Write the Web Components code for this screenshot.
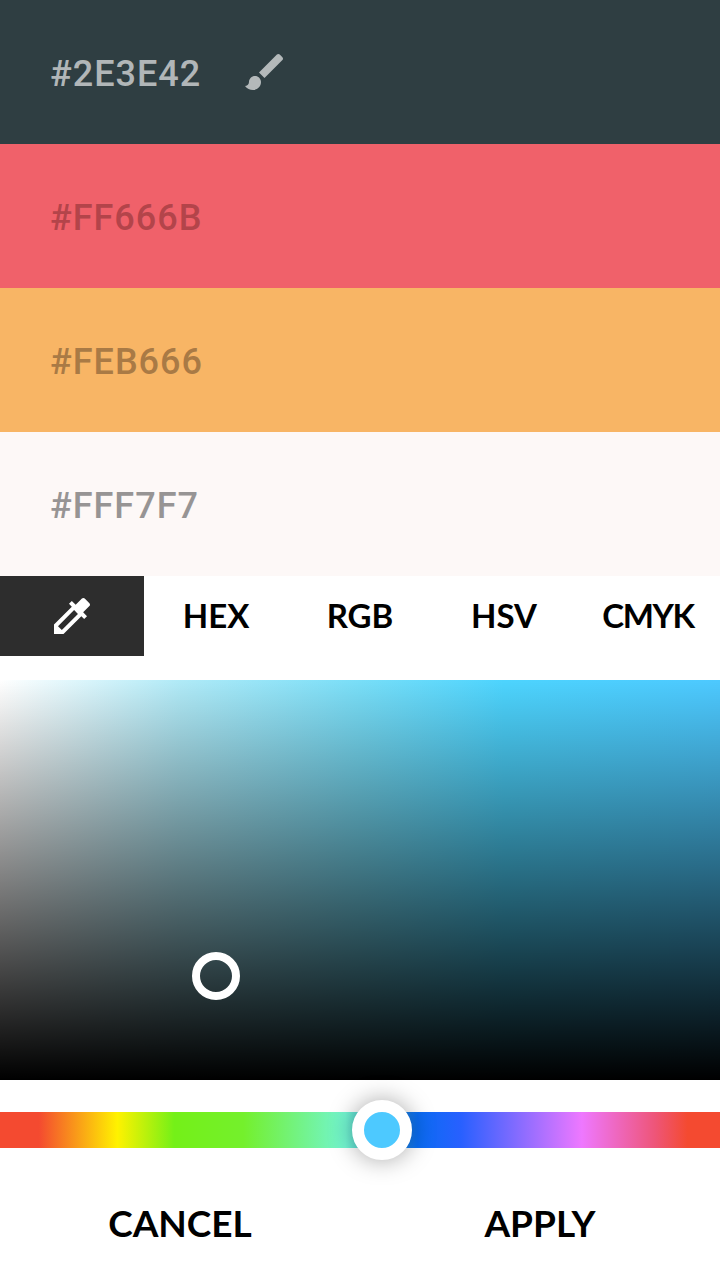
<!DOCTYPE html>
<html>
<head>
<meta charset="utf-8">
<style>
  html, body { margin: 0; padding: 0; background: #fff; }
  body { width: 720px; height: 1280px; overflow: hidden; }
</style>
</head>
<body>
<color-picker>
  <color-swatch hex="#2E3E42" bg="#2f3e42" fg="rgba(255,255,255,.64)" selected></color-swatch>
  <color-swatch hex="#FF666B" bg="#f0616a" fg="#b3444a"></color-swatch>
  <color-swatch hex="#FEB666" bg="#f8b565" fg="#a97a45"></color-swatch>
  <color-swatch hex="#FFF7F7" bg="#fdf8f7" fg="#979494"></color-swatch>
  <mode-tabs></mode-tabs>
  <sat-panel></sat-panel>
  <hue-slider></hue-slider>
  <picker-actions></picker-actions>
</color-picker>

<script>
class ColorPicker extends HTMLElement {
  constructor() {
    super();
    this.attachShadow({ mode: "open" }).innerHTML = `
      <style>
        :host { display: flex; flex-direction: column; width: 720px; height: 1280px; }
        ::slotted(*) { flex: none; }
      </style>
      <slot></slot>
    `;
  }
}

class ColorSwatch extends HTMLElement {
  connectedCallback() {
    const root = this.attachShadow({ mode: "open" });
    const brush = this.hasAttribute("selected")
      ? `<svg viewBox="0 0 24 24" width="48" height="48" fill="currentColor"><path d="M7 14c-1.66 0-3 1.34-3 3 0 1.31-1.16 2-2 2 .92 1.22 2.49 2 4 2 2.21 0 4-1.79 4-4 0-1.66-1.34-3-3-3zm13.71-9.37l-1.34-1.34c-.39-.39-1.02-.39-1.41 0L9 12.25 11.75 15l8.96-8.96c.39-.39.39-1.02 0-1.41z"/></svg>`
      : "";
    root.innerHTML = `
      <style>
        :host {
          display: flex;
          align-items: center;
          gap: 40px;
          height: 144px;
          padding-left: 50px;
          font: 500 36px Roboto, sans-serif;
          letter-spacing: 1px;
          background: ${this.getAttribute("bg")};
          color: ${this.getAttribute("fg")};
        }
        span { padding-top: 4px; }
        svg { display: block; }
      </style>
      <span>${this.getAttribute("hex")}</span>${brush}
    `;
  }
}

class ModeTabs extends HTMLElement {
  constructor() {
    super();
    const tabs = ["HEX", "RGB", "HSV"].map((t) => `<div class="tab">${t}</div>`).join("");
    this.attachShadow({ mode: "open" }).innerHTML = `
      <style>
        :host {
          display: grid;
          grid-template-columns: repeat(5, 144px);
          height: 80px;
          font: 700 33px Lato, sans-serif;
          color: #000;
        }
        .tab { display: flex; align-items: center; justify-content: center; padding-bottom: 3px; }
        .active { background: #2d2d2d; color: #fff; padding-bottom: 0; }
        .tight { letter-spacing: -1.4px; }
      </style>
      <div class="tab active">
        <svg viewBox="0 0 24 24" width="48" height="48" fill="currentColor"><path d="M20.71 5.63l-2.34-2.34c-.39-.39-1.02-.39-1.41 0l-3.12 3.12-1.93-1.91-1.41 1.41 1.42 1.42L3 16.25V21h4.75l8.92-8.92 1.42 1.42 1.41-1.41-1.92-1.92 3.12-3.12c.4-.4.4-1.03.01-1.42zM6.92 19L5 17.08l8.06-8.06 1.92 1.92L6.92 19z"/></svg>
      </div>
      ${tabs}
      <div class="tab tight">CMYK</div>
    `;
  }
}

class SatPanel extends HTMLElement {
  constructor() {
    super();
    this.attachShadow({ mode: "open" }).innerHTML = `
      <style>
        :host {
          display: block;
          position: relative;
          height: 400px;
          margin-top: 24px;
          background:
            linear-gradient(to bottom, rgba(0,0,0,0), #000),
            linear-gradient(to right, #fff 0%, #b0eaf7 25%, #78def8 50%, #4dd4fe 70%, #4dc9ff 100%);
        }
        .cursor {
          position: absolute;
          left: 192px;
          top: 272px;
          width: 48px;
          height: 48px;
          box-sizing: border-box;
          border: 8px solid #fff;
          border-radius: 50%;
        }
      </style>
      <div class="cursor"></div>
    `;
  }
}

class HueSlider extends HTMLElement {
  constructor() {
    super();
    this.attachShadow({ mode: "open" }).innerHTML = `
      <style>
        :host {
          display: block;
          position: relative;
          height: 36px;
          margin-top: 32px;
          background: linear-gradient(to right,
            #f44a30 0%, #f44a30 5.4%, #fff200 16.3%, #74f018 24.2%, #74f02c 33.8%,
            #72f5d0 48%, #0a6cf2 58%, #2860ff 64%, #ee78ff 80.8%, #ee5578 91%, #f44a30 95.5%);
        }
        .thumb {
          position: absolute;
          left: 352px;
          top: -12px;
          width: 60px;
          height: 60px;
          box-sizing: border-box;
          border: 12px solid #fff;
          border-radius: 50%;
          background: #4dc9ff;
          box-shadow: 0 0 24px rgba(0,0,0,.35);
        }
      </style>
      <div class="thumb"></div>
    `;
  }
}

class PickerActions extends HTMLElement {
  constructor() {
    super();
    this.attachShadow({ mode: "open" }).innerHTML = `
      <style>
        :host {
          display: grid;
          grid-template-columns: 1fr 1fr;
          height: 132px;
          font: 700 37px Lato, sans-serif;
          color: #000;
        }
        div { display: flex; align-items: center; justify-content: center; padding-top: 16px; }
      </style>
      <div>CANCEL</div>
      <div>APPLY</div>
    `;
  }
}

customElements.define("color-picker", ColorPicker);
customElements.define("color-swatch", ColorSwatch);
customElements.define("mode-tabs", ModeTabs);
customElements.define("sat-panel", SatPanel);
customElements.define("hue-slider", HueSlider);
customElements.define("picker-actions", PickerActions);
</script>
</body>
</html>
